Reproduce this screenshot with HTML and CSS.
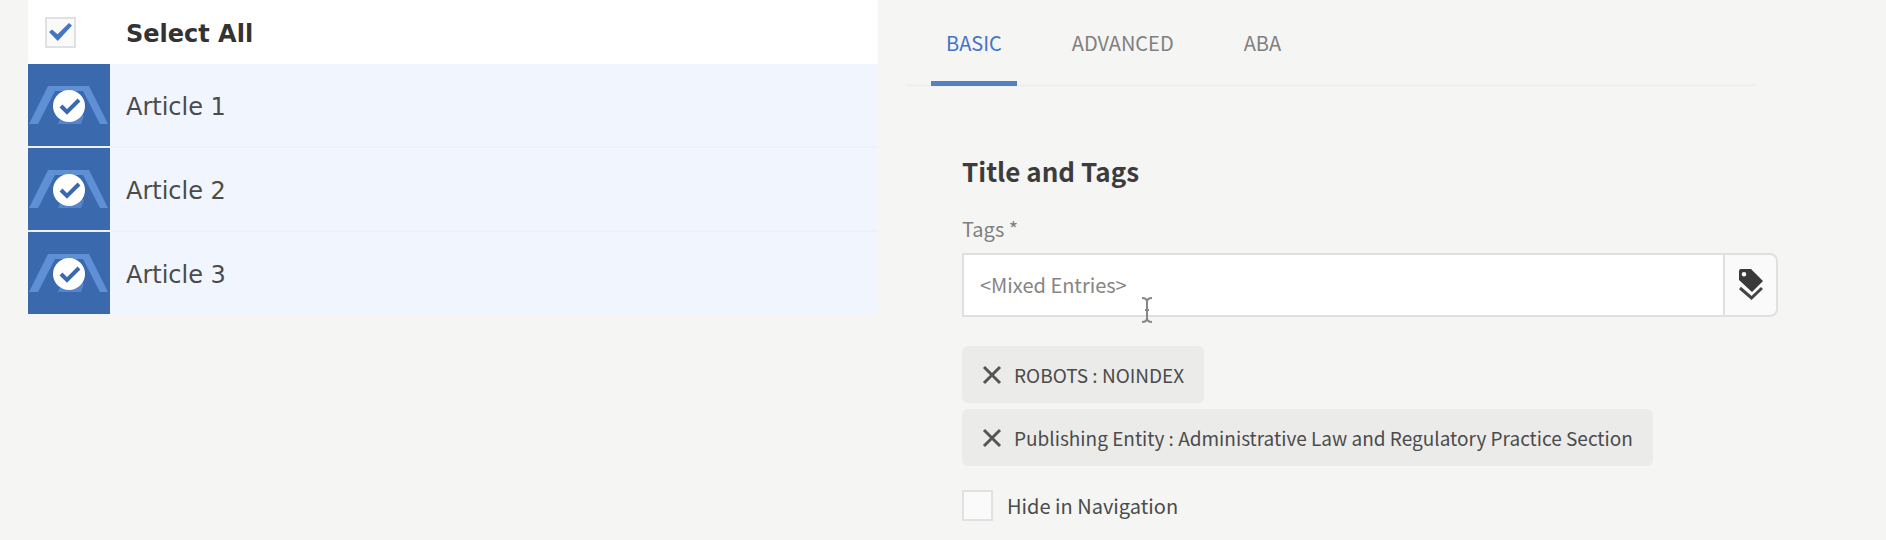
FILE: index.html
```html
<!DOCTYPE html>
<html lang="en">
<head>
<meta charset="utf-8">
<title>Article properties</title>
<link rel="stylesheet" href="styles.css">
</head>
<body>
<svg class="defs" width="0" height="0" aria-hidden="true">
  <symbol id="thumb" viewBox="0 0 82 82">
    <path d="M20 22H61L80 60H72L55 27H27L10 60H1Z" fill="#5f90d6"/>
    <path d="M30 60L34 50H52L56 52L53 60Z" fill="#5585cb"/>
    <circle cx="41" cy="42" r="16" fill="#fff"/>
    <path d="M33 42L39 48L51 36" fill="none" stroke="#3b69ad" stroke-width="4"/>
  </symbol>
  <symbol id="cross" viewBox="0 0 20 20">
    <path d="M2 2L18 18M18 2L2 18" fill="none" stroke="#555" stroke-width="3"/>
  </symbol>
</svg>
<div class="page">
  <section class="list">
    <label class="row head"><span class="lead"><input class="box" type="checkbox" checked></span><span class="name">Select All</span></label>
    <div class="row"><svg class="thumb"><use href="#thumb"/></svg><span class="name">Article 1</span></div>
    <div class="row"><svg class="thumb"><use href="#thumb"/></svg><span class="name">Article 2</span></div>
    <div class="row"><svg class="thumb"><use href="#thumb"/></svg><span class="name">Article 3</span></div>
  </section>
  <main class="panel">
    <nav class="tabs">
      <button class="tab active" type="button">BASIC</button>
      <button class="tab" type="button">ADVANCED</button>
      <button class="tab" type="button">ABA</button>
    </nav>
    <form class="form">
      <h2 class="title">Title and Tags</h2>
      <label class="label" for="tags">Tags *</label>
      <div class="field">
        <input class="input" id="tags" type="text" placeholder="&lt;Mixed Entries&gt;">
        <button class="pick" type="button" aria-label="Browse tags">
          <svg width="24" height="32" viewBox="0 0 24 32">
            <path fill-rule="evenodd" d="M2 0H12L24 12L13 23L0 11V2Q0 0 2 0ZM5 3A2.3 2.3 0 1 0 5 7.600A2.300 2.300 0 1 0 5 3Z" fill="#393939"/>
            <path d="M1 19L12.500 29L23 19" fill="none" stroke="#444" stroke-width="3"/>
          </svg>
        </button>
        <svg class="cursor" width="12" height="26" viewBox="0 0 12 26" aria-hidden="true">
          <path d="M1 1Q6 1 6 5Q6 1 11 1M6 4V22M1 25Q6 25 6 21Q6 25 11 25M4 13H8" fill="none" stroke="#888" stroke-width="2"/>
        </svg>
      </div>
      <div class="chips">
        <div class="chip"><button class="remove" type="button" aria-label="Remove ROBOTS : NOINDEX"><svg width="20" height="20"><use href="#cross"/></svg></button><span>ROBOTS : NOINDEX</span></div>
        <div class="chip"><button class="remove" type="button" aria-label="Remove Publishing Entity"><svg width="20" height="20"><use href="#cross"/></svg></button><span>Publishing Entity : Administrative Law and Regulatory Practice Section</span></div>
      </div>
      <label class="hide"><input class="box" type="checkbox"><span>Hide in Navigation</span></label>
    </form>
  </main>
</div>
</body>
</html>
```
FILE: styles.css
```css
* { box-sizing: border-box; }
body {
  margin: 0;
  background: #f5f5f4;
  color: #4b4b4b;
  font: 20px/28px "Noto Sans CJK JP", sans-serif;
}
button, input { font: inherit; color: inherit; margin: 0; }
button { border: 0; background: none; padding: 0; }
.defs { display: block; height: 0; }
.page {
  display: grid;
  grid-template-columns: 850fr 872fr;
  column-gap: 28px;
  padding: 0 108px 0 28px;
}
.list { font: 24px/32px "DejaVu Sans", sans-serif; }
.row {
  display: flex;
  align-items: center;
  gap: 16px;
  height: 84px;
  background: #f0f5fe;
  border-bottom: 2px solid #eef1f7;
}
.row:last-child { border-bottom-color: #f0f5fe; }
.head {
  height: 64px;
  background: #fff;
  border: 0;
  color: #333;
  font-weight: bold;
}
.name { padding-top: 4px; }
.thumb { width: 82px; height: 82px; background: #3b69ad; flex: none; }
.lead { display: flex; width: 82px; padding-left: 17px; }
.box {
  appearance: none;
  width: 31px;
  height: 31px;
  flex: none;
  background: #fafafa;
  border: 2px solid #e1e1e1;
  display: grid;
  place-items: center;
}
.box:checked::before {
  content: "";
  width: 23px;
  height: 18px;
  background: #4376c8;
  clip-path: polygon(0 50%, 13% 36%, 37% 62%, 87% 0, 100% 14%, 38% 100%);
}
.panel { min-width: 0; }
.tabs {
  display: flex;
  gap: 40px;
  height: 87px;
  padding-left: 25px;
  margin-right: 22px;
  border-bottom: 3px solid #f0f0ef;
}
.tab {
  height: 86px;
  padding: 0 15px;
  color: #808080;
}
.active {
  color: #4573c4;
  border-bottom: 5px solid #5480c4;
  border-top: 5px solid transparent;
}
.form { padding: 68px 0 0 56px; }
.title {
  margin: 0;
  color: #3c3c3c;
  font-size: 26px;
  line-height: 32px;
}
.label { display: block; margin: 28px 0 10px; color: #808080; }
.field { position: relative; display: flex; height: 64px; }
.input {
  flex: 1;
  min-width: 0;
  padding: 0 16px;
  background: #fff;
  border: 2px solid #e0e0e0;
}
.input::placeholder { color: #858585; opacity: 1; }
.pick {
  display: grid;
  place-items: center;
  width: 53px;
  background: #fafafa;
  border: 2px solid #e0e0e0;
  border-left: 0;
  border-radius: 0 8px 8px 0;
}
.cursor { position: absolute; left: 179px; top: 44px; }
.chips {
  display: flex;
  flex-direction: column;
  align-items: flex-start;
  gap: 6px;
  margin: 29px 0 24px;
  font-size: 19px;
}
.chip {
  display: flex;
  align-items: center;
  gap: 12px;
  height: 57px;
  padding: 0 20px;
  background: #ebebea;
  border-radius: 6px;
}
.remove { display: flex; }
.hide { display: flex; align-items: center; gap: 14px; }
```
